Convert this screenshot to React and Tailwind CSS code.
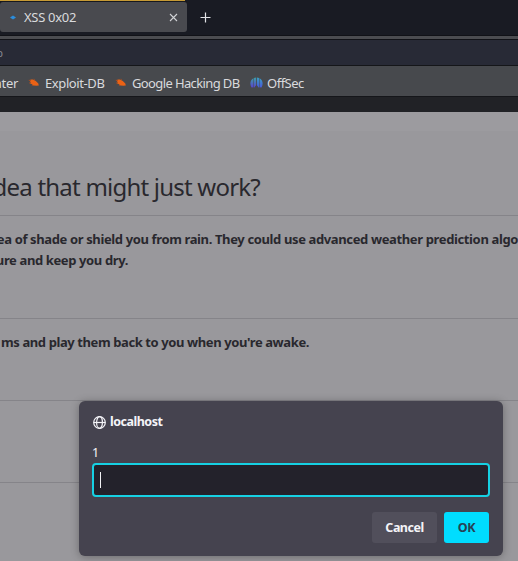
function Bug() {
  return (
    <svg className="h-3 w-3 shrink-0" viewBox="0 0 12 12">
      <path d="M1.4 3.6 2.8 2.6 5 2.4 7.8 3.9 10.3 6.6 10.8 8.6 8.4 8.8 5.3 8.4 3.6 7 1.8 6.2 2.8 5.2Z" fill="#ea6215" />
      <path d="M.7 3.2 3 3.6M6 1.8 6.6 3M3.8 8.8 5 8M1 6 2.4 5.8" stroke="#a94b20" strokeWidth=".8" />
    </svg>
  );
}

function OffSecLogo() {
  return (
    <svg className="h-3 w-[13px] shrink-0" viewBox="0 0 13 12">
      <defs>
        <linearGradient id="left" x1="0" y1="0" x2="0" y2="1">
          <stop offset="0" stopColor="#3ca0a8" />
          <stop offset="1" stopColor="#5a3fd0" />
        </linearGradient>
        <linearGradient id="right" x1="0" y1="0" x2="0" y2="1">
          <stop offset="0" stopColor="#38a0c0" />
          <stop offset="1" stopColor="#4a55dc" />
        </linearGradient>
      </defs>
      <path d="M3.4 1.2C0 3-.4 7.6 1.5 10.6L3.4 10.3ZM3.9 1 6.1 .5V8.2L3.9 11Z" fill="url(#left)" />
      <path d="M6.9 .5 9.1 1V11L6.9 8.2ZM9.6 1.2C13 3 13.4 7.6 11.5 10.6L9.6 10.3Z" fill="url(#right)" />
    </svg>
  );
}

function Globe() {
  return (
    <svg className="h-[13px] w-[13px] shrink-0" viewBox="0 0 13 13" fill="none" stroke="#f4f4f8" strokeWidth="1.2">
      <circle cx="6.5" cy="6.5" r="5.8" />
      <ellipse cx="6.5" cy="6.5" rx="2.9" ry="5.8" />
      <path d="M.7 6.5H12.3" />
    </svg>
  );
}

function Browser() {
  return (
    <header className="text-[13px] leading-4 text-[#d9dadd]">
      <div className="flex h-[35px] bg-[#191b23]">
        <div className="flex h-8 w-[187px] flex-col">
          <div className="h-px w-[185px] bg-[#c69a35]" />
          <div className="h-px w-full bg-[#17181d]" />
          <div className="flex flex-1 items-center rounded-[3px] bg-[#494a4f] pr-[9px] pl-[10px]">
            <svg className="h-[5px] w-[6px]" viewBox="0 0 6 5">
              <path d="M0 2.5 3 .5 6 2.5 3 4.5Z" fill="#2b8ddd" />
            </svg>
            <span className="ml-2 flex-1 pb-px tracking-[-0.3px]">XSS 0x02</span>
            <svg className="h-[9px] w-[9px]" viewBox="0 0 9 9" stroke="#d2d3d6" strokeWidth="1.1">
              <path d="m1 1 7 7M8 1 1 8" />
            </svg>
          </div>
        </div>
        <svg className="mt-3 ml-[13px] h-[11px] w-[11px]" viewBox="0 0 11 11" stroke="#e2e3e6" strokeWidth="1.2">
          <path d="M5.5.5v10M.5 5.5h10" />
        </svg>
      </div>
      <div className="h-[5px] border-y border-[#111217] bg-[#4b4c50]" />
      <div className="flex h-[26px] w-full overflow-hidden border-b border-[#151619] bg-[#282a36]">
        <span className="flex w-[3px] justify-end pt-[5px] text-[11px] leading-4 text-[#85868f]">p</span>
      </div>
      <nav className="flex h-[31px] items-center border-b border-[#15161a] bg-[#47494d] pt-[3px] tracking-[-0.62px]">
        <span className="flex w-[18px] shrink-0 justify-end whitespace-nowrap tracking-[-0.3px]">nter</span>
        <span className="ml-[10px] flex w-[77px] shrink-0 items-center gap-[5px] whitespace-nowrap tracking-[-0.4px]"><Bug />Exploit-DB</span>
        <span className="ml-[10px] flex w-[125px] shrink-0 items-center gap-[5px] whitespace-nowrap"><Bug />Google Hacking DB</span>
        <span className="ml-[10px] flex items-center gap-1 whitespace-nowrap tracking-[-0.5px]"><OffSecLogo />OffSec</span>
      </nav>
      <div className="h-[15px] bg-[#212226]" />
    </header>
  );
}

function Dialog() {
  return (
    <section className="absolute top-[401px] left-[79px] flex h-[155px] w-[424px] flex-col rounded-[6px] bg-[#45434f] px-[13px] text-[12.5px] text-[#f4f4f8] shadow-[0_1px_8px_rgba(0,0,0,0.3)]">
      <div className="mt-3 flex h-[18px] items-center gap-1 pl-px font-bold tracking-[-0.5px]"><Globe />localhost</div>
      <div className="mt-[13px] h-[18px] leading-[18px]">1</div>
      <div className="mt-[1px] flex h-[34px] w-[398px] items-center rounded-[4px] border-2 border-[#16d1e3] bg-[#23222b] pl-[6px]">
        <div className="h-4 w-px bg-[#f1f1f4]" />
      </div>
      <div className="mt-[15px] flex justify-end gap-[7px] pr-px font-bold">
        <button className="h-[31px] w-[65px] rounded-[3px] bg-[#514f5b] pt-0.5 tracking-[-0.5px]">Cancel</button>
        <button className="h-[31px] w-[45px] rounded-[3px] bg-[#00ddff] pt-0.5 tracking-[-0.4px] text-[#264155]">OK</button>
      </div>
    </section>
  );
}

export default function App() {
  return (
    <div className="relative h-[561px] w-[518px] overflow-hidden bg-[#99989c] font-['Noto_Sans',sans-serif]">
      <Browser />
      <main className="text-[#29282e]">
        <div className="h-[19px] bg-[#9c9b9f]" />
        <h1 className="flex h-[84px] w-[260px] justify-end pt-[40px] text-[24px] leading-8 tracking-[-0.78px] whitespace-nowrap">dea that might just work?</h1>
        <div className="h-[103px] border-t border-[#858489] pt-[13px] text-[13px] leading-[20.5px] font-bold">
          <p className="flex w-[518px] justify-end tracking-[-0.37px] whitespace-nowrap">ea of shade or shield you from rain. They could use advanced weather prediction algo</p>
          <p className="flex w-[128px] justify-end tracking-[-0.38px] whitespace-nowrap">ure and keep you dry.</p>
        </div>
        <div className="h-[82px] border-t border-[#858489] pt-[13px] text-[13px] leading-5 font-bold">
          <p className="flex w-[309px] justify-end tracking-[-0.4px] whitespace-nowrap">ms and play them back to you when you're awake.</p>
        </div>
        <div className="h-[82px] border-t border-[#858489]" />
        <div className="border-t border-[#858489]" />
      </main>
      <Dialog />
    </div>
  );
}
